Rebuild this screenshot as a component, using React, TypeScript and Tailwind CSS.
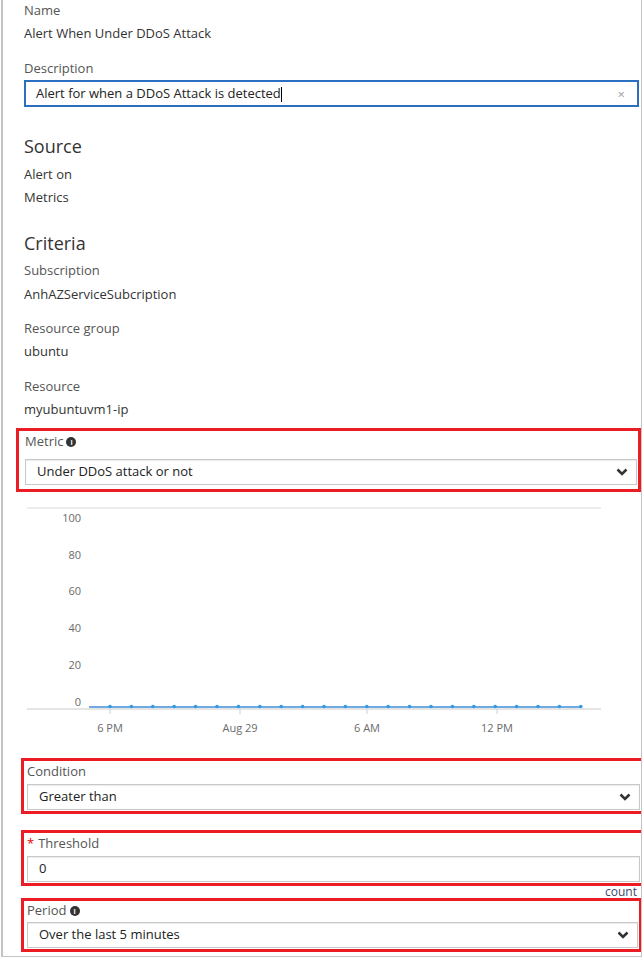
import React from 'react';

const font = { fontFamily: '"Open Sans", "Noto Sans", Arial, sans-serif' };

function Info() {
  return (
    <span className="inline-flex items-center justify-center w-[10px] h-[10px] rounded-full bg-[#333] text-white text-[7px] font-bold leading-none ml-[3px] translate-y-[1px]">
      i
    </span>
  );
}

function Chevron() {
  return (
    <svg width="12" height="8" viewBox="0 0 12 8" className="text-[#333]">
      <path d="M1.5 1.5 L6 6 L10.5 1.5" fill="none" stroke="currentColor" strokeWidth="2.6" />
    </svg>
  );
}

function Select({ value }: { value: string }) {
  return (
    <div className="h-[26px] border border-[#c8c8c8] shadow-[inset_0_1px_1px_rgba(0,0,0,0.08)] bg-white flex items-center justify-between pl-[11px] pr-[8px]">
      <span className="text-[13px] text-[#222]">{value}</span>
      <Chevron />
    </div>
  );
}

function Chart() {
  const dots = Array.from({ length: 23 }, (_, i) => 107 + i * 21.4);
  const yLabels = [
    { v: '100', y: 518 },
    { v: '80', y: 555 },
    { v: '60', y: 591 },
    { v: '40', y: 628 },
    { v: '20', y: 665 },
    { v: '0', y: 702 },
  ];
  const xLabels = [
    { v: '6 PM', x: 107 },
    { v: 'Aug 29', x: 237 },
    { v: '6 AM', x: 364 },
    { v: '12 PM', x: 494 },
  ];
  return (
    <svg width="643" height="258" viewBox="0 492 643 258" className="block" style={font}>
      <line x1="24" y1="508" x2="598" y2="508" stroke="#ececec" strokeWidth="2" />
      <line x1="24" y1="709" x2="598" y2="709" stroke="#dcdcdc" strokeWidth="1.5" />
      {yLabels.map((l) => (
        <text key={l.v} x="78" y={l.y + 4} textAnchor="end" fontSize="11" fill="#6b6b6b">
          {l.v}
        </text>
      ))}
      {xLabels.map((l) => (
        <g key={l.v}>
          <line x1={l.x} y1="709" x2={l.x} y2="714" stroke="#cfcfcf" />
          <text x={l.x} y="732" textAnchor="middle" fontSize="11" fill="#6b6b6b">
            {l.v}
          </text>
        </g>
      ))}
      <line x1="86" y1="707" x2="578" y2="707" stroke="#3f8fd8" strokeWidth="1.5" />
      {dots.map((x) => (
        <circle key={x} cx={x} cy="706.5" r="1.8" fill="#2f9ae6" />
      ))}
    </svg>
  );
}

export default function App() {
  return (
    <div className="w-[643px] h-[959px] bg-white" style={font}>
      <div className="ml-[1px] w-[641px] h-[957px] border-l-2 border-r border-b border-[#c4c4c4] overflow-hidden">
        <div className="pl-[21px] text-[13px] leading-[16px] text-[#333]">
          <div className="mt-[2px] text-[#555]">Name</div>
          <div className="mt-[7px]">Alert When Under DDoS Attack</div>
          <div className="mt-[19px] text-[#555]">Description</div>
          <div className="mt-[4px] mr-[2px] h-[27px] border-2 border-[#2b6fc1] flex items-center justify-between pl-[10px] pr-[12px]">
            <span className="text-[#222]">
              Alert for when a DDoS Attack is detected<span className="inline-block w-px h-[15px] bg-black align-middle" />
            </span>
            <span className="text-[#a0a0a0] text-[13px]">×</span>
          </div>
          <div className="mt-[27px] text-[18px] leading-[24px] text-[#333]">Source</div>
          <div className="mt-[8px]">Alert on</div>
          <div className="mt-[7px]">Metrics</div>
          <div className="mt-[26px] text-[18px] leading-[24px] text-[#333]">Criteria</div>
          <div className="mt-[7px] text-[#555]">Subscription</div>
          <div className="mt-[8px]">AnhAZServiceSubcription</div>
          <div className="mt-[18px] text-[#555]">Resource group</div>
          <div className="mt-[7px]">ubuntu</div>
          <div className="mt-[19px] text-[#555]">Resource</div>
          <div className="mt-[7px]">myubuntuvm1-ip</div>
        </div>

        <div className="mt-[11px] ml-[13px] w-[625px] h-[64px] border-[3px] border-[#ec1c24] pl-[6px] pr-[1px]">
          <div className="mt-[2px] h-[16px] text-[13px] leading-[16px] text-[#555] flex items-center">
            Metric <Info />
          </div>
          <div className="mt-[10px]">
            <Select value="Under DDoS attack or not" />
          </div>
        </div>

        <Chart />

        <div className="mt-[8px] ml-[18px] w-[623px] h-[56px] border-[3px] border-[#ec1c24] pl-[3px] pr-[1px]">
          <div className="mt-[2px] h-[16px] text-[13px] leading-[16px] text-[#555]">Condition</div>
          <div className="mt-[5px]">
            <Select value="Greater than" />
          </div>
        </div>

        <div className="mt-[16px] ml-[18px] w-[623px] h-[56px] border-[3px] border-[#ec1c24] pl-[3px] pr-[1px]">
          <div className="mt-[2px] h-[16px] text-[13px] leading-[16px] text-[#555]">
            <span className="text-[#e00] mr-[4px]">*</span>Threshold
          </div>
          <div className="mt-[5px] h-[26px] border border-[#c8c8c8] shadow-[inset_0_1px_1px_rgba(0,0,0,0.08)] flex items-center pl-[11px] text-[13px] text-[#222]">
            0
          </div>
        </div>
        <div className="h-[12px] pr-[4px] text-right text-[12px] leading-[12px] text-[#3a4a6a]">count</div>

        <div className="ml-[18px] w-[621px] h-[54px] border-[3px] border-[#ec1c24] pl-[3px] pr-[1px]">
          <div className="mt-[1px] h-[16px] text-[13px] leading-[16px] text-[#555] flex items-center">
            Period <Info />
          </div>
          <div className="mt-[4px]">
            <Select value="Over the last 5 minutes" />
          </div>
        </div>
      </div>
    </div>
  );
}
